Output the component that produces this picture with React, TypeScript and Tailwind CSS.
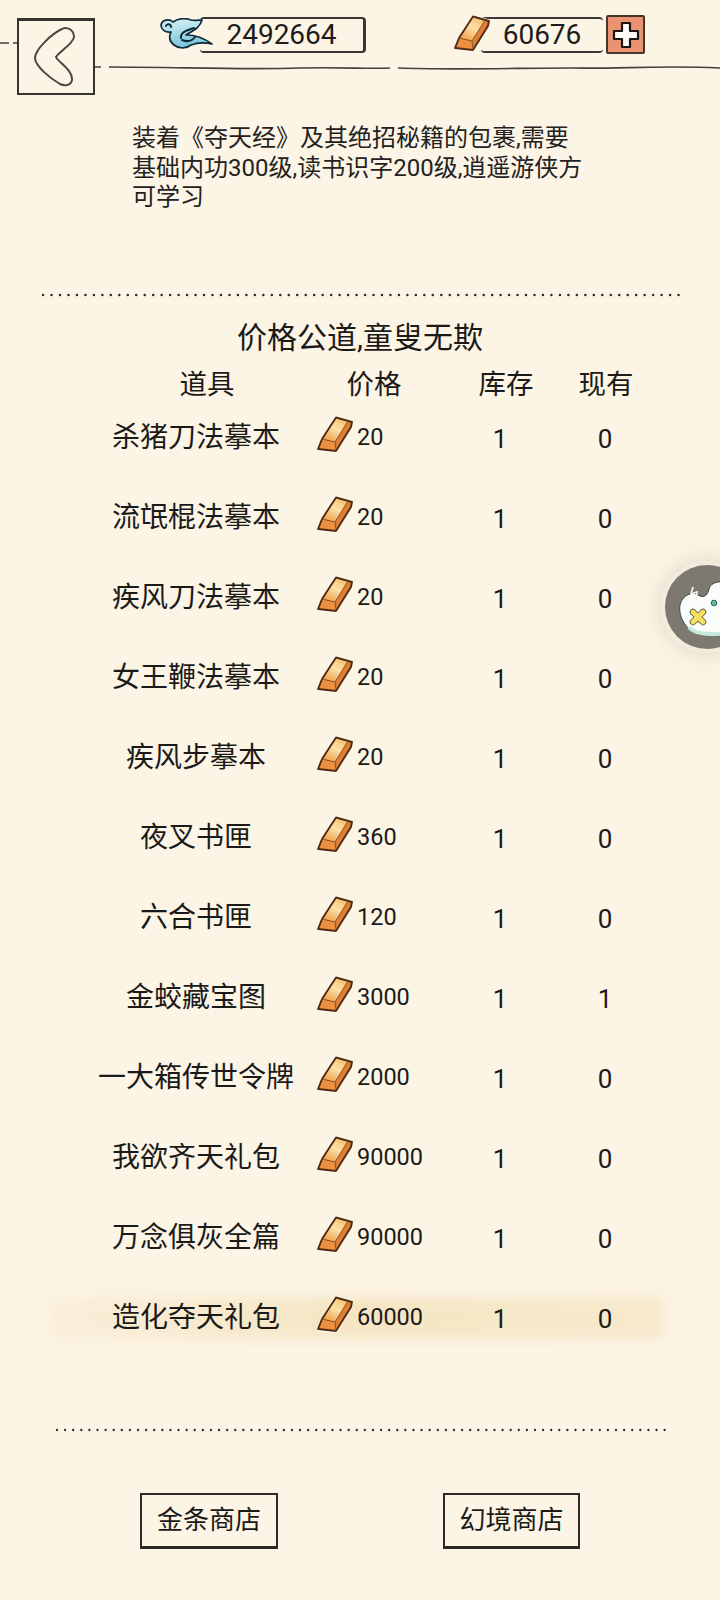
import React from 'react';

const items = [
  { name: '杀猪刀法摹本', price: 20, stock: 1, owned: 0 },
  { name: '流氓棍法摹本', price: 20, stock: 1, owned: 0 },
  { name: '疾风刀法摹本', price: 20, stock: 1, owned: 0 },
  { name: '女王鞭法摹本', price: 20, stock: 1, owned: 0 },
  { name: '疾风步摹本', price: 20, stock: 1, owned: 0 },
  { name: '夜叉书匣', price: 360, stock: 1, owned: 0 },
  { name: '六合书匣', price: 120, stock: 1, owned: 0 },
  { name: '金蛟藏宝图', price: 3000, stock: 1, owned: 1 },
  { name: '一大箱传世令牌', price: 2000, stock: 1, owned: 0 },
  { name: '我欲齐天礼包', price: 90000, stock: 1, owned: 0 },
  { name: '万念俱灰全篇', price: 90000, stock: 1, owned: 0 },
  { name: '造化夺天礼包', price: 60000, stock: 1, owned: 0, selected: true },
];

const GoldBar = ({ className }: { className: string }) => (
  <svg viewBox="0 0 37 37" className={className}>
    <defs>
      <linearGradient id="goldTop" x1="0.8" y1="0" x2="0.2" y2="1">
        <stop offset="0" stopColor="#f5bd68" />
        <stop offset="0.45" stopColor="#fde2a6" />
        <stop offset="1" stopColor="#ee9a45" />
      </linearGradient>
    </defs>
    <path d="M19 1 L35 6 L34 11 L19 36 L1 34 L5 23 Z" fill="#fffaf0" stroke="#fffaf0" strokeWidth="3" strokeLinejoin="round" />
    <path d="M19 2 L31 5 L18 26 L5 23 Z" fill="url(#goldTop)" />
    <path d="M31 5 L35 6 L34 11 L19 35 L18 26 Z" fill="#e07f33" />
    <path d="M5 23 L18 26 L19 35 L1 33 Z" fill="#ee8f42" />
    <path d="M19 1.5 L35 6 L34 11 L19 35 L1 33 L5 23 Z" fill="none" stroke="#4f2c12" strokeWidth="1.9" strokeLinejoin="round" />
    <path d="M5 23 L18 26 L31 5 M18 26 L19 35" fill="none" stroke="#8a5226" strokeWidth="1" strokeLinejoin="round" />
  </svg>
);

const Cloud = () => (
  <svg viewBox="0 0 54 32" className="w-[54px] h-[32px] shrink-0">
    <defs>
      <linearGradient id="cloudFill" x1="0.3" y1="0" x2="0.5" y2="1">
        <stop offset="0" stopColor="#d4f0f4" />
        <stop offset="1" stopColor="#72c2da" />
      </linearGradient>
    </defs>
    <path d="M11 14 C5 15 1 11 1 7 C2 2 9 0 13 4 C18 0 26 0 31 2 C35 3 39 2 42 2 C41 6 39 8 37 10 C33 13 29 15 26 17 C34 17 44 20 52 26 C44 24 36 25 31 27 C26 31 19 31 14 27 C9 23 9 18 11 14 Z" fill="url(#cloudFill)" stroke="#0f2a38" strokeWidth="1.7" strokeLinejoin="round" />
    <path d="M6 8 C7 5 11 6 11 9 M21 20 C20 14 28 12 34 10 M22 22 C27 24 32 23 35 19" fill="none" stroke="#0f2a38" strokeWidth="2" strokeLinecap="round" />
  </svg>
);

const DottedLine = () => (
  <svg viewBox="0 0 640 4" className="w-full h-[4px] block">
    <line x1="1" y1="2" x2="639" y2="2" stroke="#2b2a26" strokeWidth="2.4" strokeLinecap="round" strokeDasharray="0.1 8.4" />
  </svg>
);

const Pill = ({ value, className }: { value: string; className: string }) => (
  <div className={`h-[36px] flex items-center justify-center border-y-2 border-[#3a3833] rounded-[4px] text-[28px] leading-none text-[#1d1c1a] ${className}`}>
    {value}
  </div>
);

export default function App() {
  return (
    <div className="relative w-[720px] h-[1600px] overflow-hidden bg-[#fcf4e5] text-[#1b1a18] font-['Roboto','Noto_Sans_CJK_SC',sans-serif]">
      {/* top bar */}
      <div className="relative h-[100px]">
        <svg viewBox="0 0 720 100" className="absolute inset-0 w-[720px] h-[100px]">
          <path d="M0 43 H9 M13 43 H17" stroke="#45423b" strokeWidth="1.5" fill="none" />
          <path d="M94 67 H101 M109 67 C180 67 240 70 300 68 C340 67 370 69 390 68 M398 68 C450 70 520 68 570 68 C620 69 660 65 720 68" stroke="#45423b" strokeWidth="1.7" fill="none" />
        </svg>
        <div className="relative flex items-start">
          <div className="ml-[17px] mt-[18px] w-[78px] h-[77px] flex items-center justify-center border-2 border-t-[3px] border-[#35332e] bg-[#fcf4e5]">
            <svg viewBox="0 0 46 62" className="w-[46px] h-[62px]">
              <path d="M29 3 C34 0 41 4 41 11 C41 17 25 27 23 31 C25 36 40 44 39 54 C38 60 31 60 27 58 C18 53 2 40 2 32 C2 24 18 8 29 3 Z" fill="none" stroke="#4a4841" strokeWidth="2" />
            </svg>
          </div>
          <div className="ml-[65px] mt-[15px] flex items-start">
            <div className="relative z-10 mt-[3px]">
              <Cloud />
            </div>
            <Pill value="2492664" className="w-[166px] -ml-[14px] mt-[2px] border-r-[3px]" />
          </div>
          <div className="ml-[88px] mt-[15px] flex items-start">
            <GoldBar className="relative z-10 w-[37px] h-[37px] shrink-0" />
            <Pill value="60676" className="w-[122px] -ml-[10px] mt-[2px]" />
            <div className="ml-[3px] w-[39px] h-[39px] flex items-center justify-center border-2 border-[#4a3328] rounded-[2px] bg-[#e99372]">
              <svg viewBox="0 0 28 28" className="w-[28px] h-[28px]">
                <path d="M10 2 H18 V10 H26 V18 H18 V26 H10 V18 H2 V10 H10 Z" fill="#fffdf8" stroke="#1d1511" strokeWidth="2.2" strokeLinejoin="round" />
              </svg>
            </div>
          </div>
        </div>
      </div>

      {/* description */}
      <p className="ml-[132px] mt-[24px] w-[460px] text-[24px] leading-[29.5px] text-[#23221f]">
        装着《夺天经》及其绝招秘籍的包裹,需要基础内功300级,读书识字200级,逍遥游侠方可学习
      </p>

      <div className="ml-[42px] mt-[80px] w-[638px]">
        <DottedLine />
      </div>

      <h2 className="mt-[21px] text-center text-[30px] leading-[40px] font-normal">价格公道,童叟无欺</h2>

      {/* table header */}
      <div className="mt-[7px] h-[40px] pl-[100px] grid grid-cols-[214px_120px_144px_56px] items-center text-[27.5px] leading-none">
        <span className="text-center whitespace-nowrap">道具</span>
        <span className="text-center whitespace-nowrap">价格</span>
        <span className="text-center whitespace-nowrap">库存</span>
        <span className="text-center whitespace-nowrap">现有</span>
      </div>

      {/* rows */}
      <div className="mt-[-7px]">
        {items.map((item) => (
          <div key={item.name} className="relative h-[80px] pl-[90px] grid grid-cols-[212px_146px_104px_106px] items-center">
            {item.selected && (
              <div className="absolute left-[50px] right-[56px] top-[19px] h-[42px] bg-gradient-to-r from-[#f9efd9] via-[#f5e5c3] to-[#f7e9cc] blur-[6px]" />
            )}
            <span className="relative text-center text-[28px] leading-none whitespace-nowrap">{item.name}</span>
            <div className="relative flex items-center pl-[15px]">
              <GoldBar className="w-[37px] h-[37px] shrink-0 -mt-[6px]" />
              <span className="ml-[3px] mt-[1px] text-[23.5px] leading-none">{item.price}</span>
            </div>
            <span className="relative mt-[2px] text-center text-[26px] leading-none">{item.stock}</span>
            <span className="relative mt-[2px] text-center text-[26px] leading-none">{item.owned}</span>
          </div>
        ))}
      </div>

      <div className="ml-[56px] mt-[70px] w-[610px]">
        <DottedLine />
      </div>

      {/* shop buttons */}
      <div className="mt-[61px] flex">
        <button className="ml-[140px] w-[138px] h-[56px] border-2 border-b-[3px] border-[#2c2a26] text-[26px] leading-none">金条商店</button>
        <button className="ml-[165px] w-[137px] h-[56px] border-2 border-b-[3px] border-[#2c2a26] text-[26px] leading-none">幻境商店</button>
      </div>

      {/* floating assistant */}
      <div className="absolute left-[665px] top-[565px] w-[84px] h-[84px] rounded-full bg-[#7d7870] ring-4 ring-[#f3ecdc] shadow-[0_0_24px_rgba(120,110,90,0.35)] overflow-hidden">
        <svg viewBox="0 0 84 84" className="w-[84px] h-[84px]">
          <path d="M15 40 C17 30 28 26 33 30 C38 33 42 32 44 24 C46 17 56 14 66 20 L84 26 V66 C70 68 50 72 34 69 C22 67 13 52 15 40 Z" fill="#fbfdfa" stroke="#2f4a44" strokeWidth="1" />
          <path d="M24 62 C30 71 54 71 84 64" fill="none" stroke="#c6ead9" strokeWidth="4" />
          <path d="M28 47 L38 57 M38 47 L28 57" stroke="#5f5a3a" strokeWidth="6.5" strokeLinecap="round" />
          <path d="M28 47 L38 57 M38 47 L28 57" stroke="#f7e05f" strokeWidth="4.8" strokeLinecap="round" />
          <circle cx="49" cy="38" r="2.8" fill="#5cc1a9" stroke="#2f5a50" strokeWidth="1" />
          <path d="M28 22 L26 29 L32 27 L31 35" fill="none" stroke="#f6f3ea" strokeWidth="1.8" />
        </svg>
      </div>
    </div>
  );
}
